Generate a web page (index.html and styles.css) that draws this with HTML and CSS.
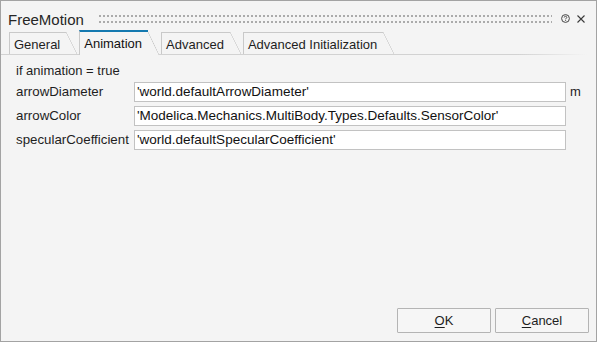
FILE: index.html
```html
<!DOCTYPE html>
<html>
<head>
<meta charset="utf-8">
<link rel="stylesheet" href="styles.css">
</head>
<body>
<div class="window">
  <div class="titlebar">
    <span class="title">FreeMotion</span>
    <span class="grip"></span>
    <span class="tbtns">
      <svg class="ico" width="9" height="9" viewBox="0 0 9 9"><circle cx="4.5" cy="4.5" r="3.9" fill="none" stroke="#454545" stroke-width="1"/><path d="M3.2 3.5 C3.2 2.6 3.8 2.3 4.5 2.3 C5.2 2.3 5.8 2.7 5.8 3.4 C5.8 4.2 4.6 4.3 4.6 5.2" fill="none" stroke="#454545" stroke-width="0.95"/><rect x="4.1" y="5.8" width="1" height="1" fill="#454545"/></svg>
      <svg class="ico" width="8" height="8" viewBox="0 0 8 8"><path d="M0.5 0.5 L7.5 7.5 M7.5 0.5 L0.5 7.5" stroke="#3a3a3a" stroke-width="1.1"/></svg>
    </span>
  </div>
  <div class="tabs">
    <div class="tab">General</div>
    <div class="tab active">Animation</div>
    <div class="tab">Advanced</div>
    <div class="tab">Advanced Initialization</div>
  </div>
  <div class="content">
    <div class="cond">if animation = true</div>
    <div class="grid">
      <div class="lbl">arrowDiameter</div>
      <div class="field">'world.defaultArrowDiameter'</div>
      <div class="unit">m</div>
      <div class="lbl">arrowColor</div>
      <div class="field">'Modelica.Mechanics.MultiBody.Types.Defaults.SensorColor'</div>
      <div class="unit"></div>
      <div class="lbl">specularCoefficient</div>
      <div class="field">'world.defaultSpecularCoefficient'</div>
      <div class="unit"></div>
    </div>
  </div>
  <div class="footer">
    <div class="btn"><u>O</u>K</div>
    <div class="btn"><u>C</u>ancel</div>
  </div>
</div>
</body>
</html>
```
FILE: styles.css
```css
html, body {
  margin: 0;
  padding: 0;
  background: #f4f4f4;
}
.window {
  width: 597px;
  height: 342px;
  box-sizing: border-box;
  border: 1px solid #a3a3a3;
  background: #f4f4f4;
  display: flex;
  flex-direction: column;
  font-family: "Liberation Sans", Arial, sans-serif;
  font-size: 13px;
  color: #1e1e1e;
}
.titlebar {
  display: flex;
  height: 28px;
  padding: 0 11px 0 7px;
}
.title {
  font-size: 15px;
  line-height: 18px;
  padding-top: 10px;
  color: #262626;
}
.grip {
  flex: 1;
  height: 8px;
  margin: 14px 9px 0 15px;
  background-image:
    linear-gradient(90deg, #ababab 2px, transparent 2px),
    linear-gradient(90deg, #ababab 2px, transparent 2px);
  background-size: 4px 2px, 4px 2px;
  background-position: 0 0, 0 6px;
  background-repeat: repeat-x;
}
.tbtns {
  display: flex;
  align-items: center;
  gap: 7px;
  margin-top: 13px;
  height: 9px;
}
.ico {
  display: block;
}
.tabs {
  display: flex;
  align-items: flex-end;
  height: 25px;
  padding: 0 0 1px 8px;
  margin-right: 9px;
  background: linear-gradient(to right, #d2d2d2 88%, rgba(210,210,210,0)) left bottom / 100% 1px no-repeat;
}
.tab {
  position: relative;
  border-top: 1px solid #c9c9c9;
  border-left: 1px solid #c9c9c9;
  padding: 2px 6px 0 4px;
  line-height: 19px;
  margin-right: 13px;
  white-space: nowrap;
  color: #1e1e1e;
}
.tab::after {
  content: "";
  position: absolute;
  left: 100%;
  top: -1px;
  width: 11px;
  height: calc(100% + 1px);
  background: linear-gradient(to top right, transparent calc(50% - 0.6px), #c9c9c9 50%, transparent calc(50% + 0.6px));
}
.tab.active {
  border-top: 2px solid #1479b0;
  padding-bottom: 2px;
  margin-bottom: -1px;
  background: #f4f4f4;
  color: #111;
}
.tab.active::after {
  top: 0;
  height: 100%;
  background: linear-gradient(to top right, #f4f4f4 calc(50% - 0.6px), #c9c9c9 50%, transparent calc(50% + 0.6px));
}
.content {
  padding: 6px 0 0 15px;
}
.cond {
  line-height: 20px;
  margin-bottom: 1px;
}
.grid {
  display: grid;
  grid-template-columns: 114px 432px auto;
  column-gap: 4px;
  row-gap: 4px;
  align-items: center;
}
.lbl {
  white-space: nowrap;
  line-height: 20px;
  font-size: 13.3px;
}
.field {
  box-sizing: border-box;
  height: 20px;
  border: 1px solid #c2c2c2;
  background: #ffffff;
  padding: 0 2px;
  line-height: 18px;
  font-size: 13.5px;
  white-space: nowrap;
  overflow: hidden;
  color: #111;
}
.unit {
  line-height: 20px;
}
.footer {
  margin-top: auto;
  display: flex;
  justify-content: flex-end;
  gap: 4px;
  padding: 0 7px 8px 0;
}
.btn {
  box-sizing: border-box;
  width: 94px;
  height: 25px;
  border: 1px solid #b4b4b4;
  border-radius: 1px;
  background: #f6f6f6;
  display: flex;
  align-items: center;
  justify-content: center;
  color: #1e1e1e;
}
.btn u {
  text-decoration-thickness: 1px;
  text-underline-offset: 2px;
}
```
